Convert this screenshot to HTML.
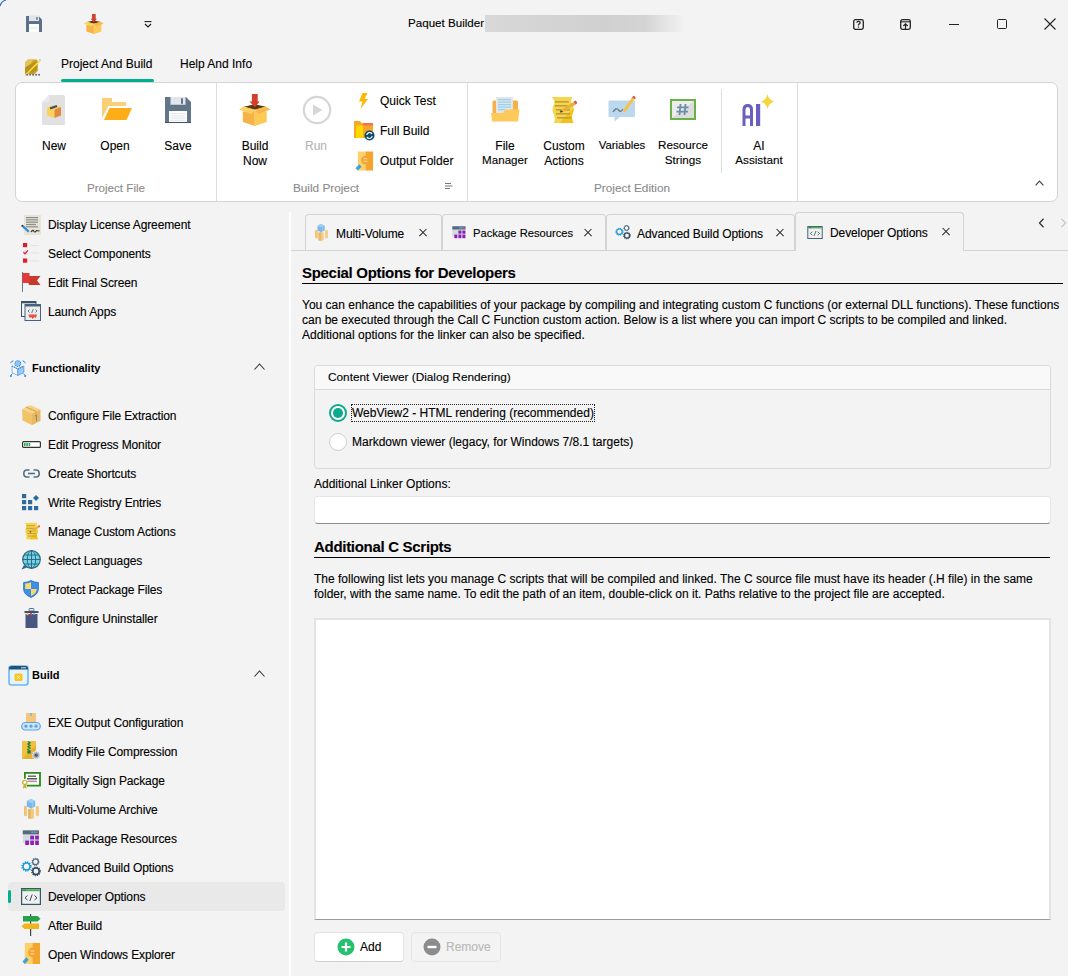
<!DOCTYPE html>
<html><head><meta charset="utf-8">
<style>
*{margin:0;padding:0;box-sizing:border-box}
html,body{width:1068px;height:976px;overflow:hidden;background:#f3f3f3;font-family:"Liberation Sans",sans-serif;font-size:12px;color:#000}
.a{position:absolute}
.t{position:absolute;white-space:nowrap;line-height:15px;-webkit-text-stroke:0.12px currentColor}
.c{text-align:center}
.n{letter-spacing:-0.12px}
.tt{letter-spacing:-0.1px}
svg{position:absolute;overflow:visible}
.g{color:#8c8c8c}
.sep{position:absolute;background:#dcdcdc;width:1px}
.tab{position:absolute;border:1px solid #d3d3d3;border-bottom:none;border-radius:4px 4px 0 0;background:#f4f4f4}
.x{position:absolute;width:8px;height:8px}
.x:before,.x:after{content:"";position:absolute;left:-1px;top:3.4px;width:10px;height:1.3px;background:#262626;transform:rotate(45deg)}
.x:after{transform:rotate(-45deg)}
</style></head><body>
<!-- ============ TITLE BAR ============ -->
<svg style="left:0;top:0" width="8" height="8"><path d="M0 6 Q1 1.5 6 0" fill="none" stroke="#2a6fc9" stroke-width="1.3"/></svg>
<svg style="left:26px;top:16px" width="16" height="16" viewBox="0 0 16 16">
 <path d="M0 0 H12.5 L16 3.5 V16 H0Z" fill="#5e7189"/>
 <rect x="3" y="-0.6" width="10" height="5.6" fill="#e1e5ea"/>
 <rect x="10.3" y="1" width="1.4" height="2.8" fill="#5e7189"/>
 <rect x="3" y="8" width="10" height="8" fill="#fbfcfc"/>
 <rect x="4" y="11.6" width="8" height="1" fill="#e3e7eb"/>
</svg>
<svg style="left:84px;top:14px" width="20" height="20" viewBox="0 0 32 32"><path d="M4.7 12.7 L15.8 10.2 L26.8 12.7 L15.8 15.7Z" fill="#5c3a0c"/>
  <path d="M3.8 17.4 L15.8 16.5 V32 L3.8 28Z" fill="#f7b446"/>
  <path d="M15.8 16.5 L27.7 17.4 V28 L15.8 32Z" fill="#fdca55"/>
  <path d="M0 15.5 L4.7 12.5 L15.8 15.7 L12.4 20Z" fill="#fdd061"/>
  <path d="M15.8 15.7 L26.8 12.5 L31.5 15.5 L19.5 20Z" fill="#f8b74b"/>
  <path d="M12.9 0 H18.7 V7.5 H20.8 L15.8 13.3 L10.5 7.5 H12.9Z" fill="#d23f2d"/></svg>
<svg style="left:144px;top:21px" width="8" height="7" viewBox="0 0 8 7"><path d="M0.5 0.6 H7.5" stroke="#222" stroke-width="1.1"/><path d="M1 3 L4 6 L7 3" fill="none" stroke="#222" stroke-width="1.2"/></svg>
<div class="t" style="left:408px;top:15px;font-size:11.6px">Paquet Builder</div>
<div class="a" style="left:485px;top:15px;width:200px;height:17px;background:linear-gradient(90deg,#d8d8d8 0%,#d4d4d4 30%,#d0d0d0 60%,#d4d4d4 80%,#f3f3f3 100%)"></div>
<!-- window buttons -->
<svg style="left:853px;top:19px" width="11" height="11" viewBox="0 0 11 11">
 <rect x="0.7" y="0.7" width="9.6" height="9.6" rx="1.8" fill="none" stroke="#222" stroke-width="1.3"/>
 <path d="M3.8 3.8 Q3.8 2.4 5.5 2.4 Q7.2 2.4 7.2 3.8 Q7.2 4.8 5.5 5.4 V6.4" fill="none" stroke="#222" stroke-width="1.2"/>
 <rect x="4.9" y="7.5" width="1.2" height="1.2" fill="#222"/>
</svg>
<svg style="left:900px;top:19px" width="11" height="11" viewBox="0 0 11 11">
 <rect x="0.7" y="0.7" width="9.6" height="9.6" rx="1.8" fill="none" stroke="#222" stroke-width="1.3"/>
 <path d="M1 2.8 H10" stroke="#222" stroke-width="1.1"/>
 <path d="M5.5 10 V5 M3.3 7 L5.5 4.8 L7.7 7" fill="none" stroke="#222" stroke-width="1.2"/>
</svg>
<div class="a" style="left:949px;top:24px;width:10px;height:1px;background:#222"></div>
<div class="a" style="left:997px;top:19px;width:10px;height:10px;border:1px solid #222;border-radius:1.5px"></div>
<svg style="left:1044px;top:18px" width="12" height="12" viewBox="0 0 12 12"><path d="M0.5 0.5 L11.5 11.5 M11.5 0.5 L0.5 11.5" stroke="#222" stroke-width="1.1"/></svg>

<!-- ============ RIBBON TABS ============ -->
<svg style="left:24px;top:59px" width="17" height="17" viewBox="0 0 16 16">
 <path d="M1 3 L4 0.5 H12 L13 2 V11 L10 14 H1Z" fill="#c9a227"/>
 <path d="M1 3 L4 0.5 H9 L6 5 L1 8Z" fill="#e3c55a"/>
 <path d="M6 5 L12 2 V10 L8 13 L1 13 V8Z" fill="#a8851c" opacity=".6"/>
 <path d="M0.5 15 L14.5 1 L15.5 2 L1.5 16Z" fill="#ffd93a"/>
 <path d="M13.5 0.5 L15.5 0 L16 2 Z" fill="#a8c8d8"/>
 <g fill="#707070"><circle cx="3" cy="14.8" r="1"/><circle cx="5.8" cy="14.8" r="1"/><circle cx="8.6" cy="14.8" r="1"/><circle cx="11.4" cy="14.8" r="1"/><circle cx="14.2" cy="14.8" r="1"/></g>
</svg>
<div class="t" style="left:61px;top:57px">Project And Build</div>
<div class="a" style="left:61px;top:79px;width:93px;height:3px;border-radius:2px;background:#00ae90"></div>
<div class="t" style="left:180px;top:57px">Help And Info</div>
<!-- ============ RIBBON PANEL ============ -->
<div class="a" style="left:15px;top:82px;width:1043px;height:120px;background:#fff;border:1px solid #d4d4d4;border-radius:7px"></div>
<div class="sep" style="left:216px;top:83px;height:118px"></div>
<div class="sep" style="left:467px;top:83px;height:118px"></div>
<div class="sep" style="left:797px;top:83px;height:118px"></div>
<div class="sep" style="left:721px;top:89px;height:84px"></div>
<svg style="left:1035px;top:180px" width="9" height="6" viewBox="0 0 9 6"><path d="M0.6 5.3 L4.5 1.2 L8.4 5.3" fill="none" stroke="#444" stroke-width="1.2"/></svg>

<!-- New -->
<svg style="left:42px;top:95px" width="23" height="30" viewBox="0 0 23 30">
 <path d="M7 0 H21.5 Q23 0 23 1.5 V28.5 Q23 30 21.5 30 H1.5 Q0 30 0 28.5 V7Z" fill="#e1e1e1"/>
 <path d="M0 7 L7 0 V7Z" fill="#e9ebee"/>
 <path d="M5 12.5 L11.5 10 L19 12 L12.5 14.5Z" fill="#fbd35c"/>
 <path d="M5 12.5 L12.5 14.5 V23 L5 20.5Z" fill="#fcd25a"/>
 <path d="M12.5 14.5 L19 12 V20.5 L12.5 23Z" fill="#e18a3b"/>
 <path d="M8 13.5 L15 11" stroke="#34506a" stroke-width="2"/>
</svg>
<!-- Open -->
<svg style="left:102px;top:98px" width="31" height="22" viewBox="0 0 31 22">
 <path d="M0 0 H10 V4 H24 V8 H6.5 L0 20Z" fill="#f9cf78"/>
 <path d="M7.5 10 H30 L24.5 22 H2Z" fill="#fdad17"/>
</svg>
<!-- Save -->
<svg style="left:165px;top:97px" width="26" height="26" viewBox="0 0 26 26">
 <path d="M0 0 H21 L26 5 V26 H0Z" fill="#61768b"/>
 <rect x="5.5" y="0" width="15" height="8.5" fill="#e2e6ea"/>
 <rect x="5.5" y="7.8" width="15" height="1" fill="#4e6176"/>
 <rect x="16" y="1.3" width="2" height="5.5" fill="#61768b"/>
 <rect x="4" y="14" width="18" height="11" fill="#fdfdfd"/>
 <g fill="#e3e7eb"><rect x="5.5" y="16" width="15" height="1"/><rect x="5.5" y="18.4" width="15" height="1"/><rect x="5.5" y="20.6" width="15" height="1"/><rect x="5.5" y="22.8" width="15" height="1"/></g>
 <rect x="0" y="25" width="26" height="1" fill="#3e5166"/>
</svg>
<div class="t c" style="left:30px;top:139px;width:48px">New</div>
<div class="t c" style="left:91px;top:139px;width:48px">Open</div>
<div class="t c" style="left:154px;top:139px;width:48px">Save</div>
<div class="t c g" style="left:66px;top:180px;width:100px;font-size:11.6px">Project File</div>

<!-- Build Now -->
<svg style="left:239px;top:94px" width="32" height="32" viewBox="0 0 32 32"><path d="M4.7 12.7 L15.8 10.2 L26.8 12.7 L15.8 15.7Z" fill="#5c3a0c"/>
  <path d="M3.8 17.4 L15.8 16.5 V32 L3.8 28Z" fill="#f7b446"/>
  <path d="M15.8 16.5 L27.7 17.4 V28 L15.8 32Z" fill="#fdca55"/>
  <path d="M0 15.5 L4.7 12.5 L15.8 15.7 L12.4 20Z" fill="#fdd061"/>
  <path d="M15.8 15.7 L26.8 12.5 L31.5 15.5 L19.5 20Z" fill="#f8b74b"/>
  <path d="M12.9 0 H18.7 V7.5 H20.8 L15.8 13.3 L10.5 7.5 H12.9Z" fill="#d23f2d"/></svg>
<!-- Run -->
<svg style="left:302px;top:95px" width="30" height="30" viewBox="0 0 30 30">
 <circle cx="15" cy="15" r="13.2" fill="none" stroke="#d6d6d6" stroke-width="2.2"/>
 <path d="M11 9.5 L20.5 15 L11 20.5Z" fill="#d6d6d6"/>
</svg>
<div class="t c" style="left:230px;top:139px;width:50px">Build</div>
<div class="t c" style="left:230px;top:154px;width:50px">Now</div>
<div class="t c" style="left:292px;top:139px;width:48px;color:#b4b4b4">Run</div>
<!-- quick test -->
<svg style="left:359px;top:93px" width="9" height="16" viewBox="0 0 9 16"><path d="M3.5 0 H8.5 L5.5 6 H9 L1.5 16 L3.5 8.5 H0Z" fill="#fbb800"/></svg>
<!-- full build -->
<svg style="left:354px;top:121px" width="21" height="19" viewBox="0 0 21 19">
 <path d="M0 0 H6 L7.5 2 H19 V17 H0Z" fill="#f8a62a"/>
 <rect x="9" y="2" width="10" height="2.5" fill="#f6744a"/>
 <rect x="2" y="4.5" width="7" height="12.5" fill="#ffd800"/>
 <circle cx="15.5" cy="14.5" r="5" fill="#0c4a68"/>
 <path d="M12.8 14 A2.8 2.8 0 0 1 17.8 12.6 M18.2 15 A2.8 2.8 0 0 1 13.2 16.4" fill="none" stroke="#fff" stroke-width="1.2"/>
 <path d="M17 11.2 L18.6 12.9 L16.6 13.2Z M14 17.8 L12.4 16.1 L14.4 15.8Z" fill="#fff"/>
</svg>
<!-- output folder -->
<svg style="left:355px;top:151px" width="19" height="20" viewBox="0 0 20 20"><rect x="3" y="0" width="8" height="20" fill="#fdd06a"/>
  <rect x="11" y="0" width="8" height="20" fill="#f4a52a"/>
  <circle cx="11" cy="9" r="4.6" fill="#f2a535"/>
  <g fill="#fcd58a"><rect x="9" y="7" width="4" height="1.2"/><rect x="9" y="9.8" width="4" height="1.2"/></g>
  <path d="M0.5 17.5 L4.5 13.5 L7 16 L3 20 Z" fill="#3ba3e0"/></svg>
<div class="t" style="left:380px;top:94px">Quick Test</div>
<div class="t" style="left:380px;top:124px">Full Build</div>
<div class="t" style="left:380px;top:154px">Output Folder</div>
<div class="t c g" style="left:276px;top:181px;width:100px;font-size:11.8px">Build Project</div>
<svg style="left:445px;top:183px" width="8" height="7" viewBox="0 0 8 7"><path d="M0 0.5 H6 M0 3 H7.5 M0 5.5 H5" stroke="#777" stroke-width="1"/></svg>

<!-- File Manager -->
<svg style="left:491px;top:96px" width="29" height="27" viewBox="0 0 29 27">
 <path d="M1.5 6 Q1.5 4.5 3 4.5 H26 Q27 4.5 27 6 V17 H1.5Z" fill="#f5b04c"/>
 <rect x="5" y="1" width="17" height="16" fill="#e4e4e4"/>
 <g fill="#92d5f6"><rect x="7" y="3" width="13" height="1.3"/><rect x="7" y="5.5" width="13" height="1.3"/><rect x="7" y="8" width="13" height="1.3"/><rect x="7" y="10.5" width="13" height="1.3"/><rect x="7" y="13" width="7" height="1.3"/></g>
 <path d="M0 17 H12 L14.5 13.5 H28.5 L27 25.5 H1Z" fill="#fdc95a"/>
</svg>
<!-- Custom Actions -->
<svg style="left:549px;top:96px" width="28" height="28" viewBox="0 0 24 28" preserveAspectRatio="none"><path d="M2 1 H20 Q18 5 20 9 Q22 14 20 18 Q19 22 21 27 H4 Q6 23 4 18 Q2 13 4 9 Q6 5 2 1Z" fill="#f8d34c"/>
  <path d="M21 9 Q22 14 20 18 Q19 22 21 27 H9 L21 12Z" fill="#f2c21a"/>
  <g fill="#bba13c"><rect x="5" y="5" width="12" height="1.6"/><rect x="5" y="9" width="11" height="1.6"/><rect x="6" y="13" width="12" height="1.6"/><rect x="6" y="17" width="12" height="1.6"/><rect x="7" y="21" width="12" height="1.6"/></g>
  <path d="M10 14 L21 6 L23 8.5 L12 16 L9.5 16.5Z" fill="#e8b23c"/>
  <path d="M21 6 L22.5 4.5 Q24.5 5.5 24 7.5 L23 8.5Z" fill="#e0553a"/>
  <path d="M9.5 16.5 L10 14 L12 16Z" fill="#333"/></svg>
<!-- Variables -->
<svg style="left:608px;top:94px" width="28" height="28" viewBox="0 0 28 28">
 <path d="M1.5 6.5 H26 Q27 6.5 27 7.5 V22 Q27 23 26 23 H12 L6.5 27.5 V23 H1.5 Q0.5 23 0.5 22 V7.5 Q0.5 6.5 1.5 6.5Z" fill="#bcd8ef"/>
 <path d="M5 18 Q8 13 10.5 16 Q12.5 19 15 15" fill="none" stroke="#6e7f8c" stroke-width="1.4"/>
 <path d="M15.5 15.5 L24 3.5 L26.5 5.3 L18 17.3 L15.2 18.2Z" fill="#f4c14a"/>
 <path d="M24 3.5 L25.2 1.8 Q27.5 2.3 27.8 4.2 L26.5 5.3Z" fill="#df5b3c"/>
</svg>
<!-- Resource Strings -->
<svg style="left:670px;top:99px" width="26" height="21" viewBox="0 0 26 21">
 <rect x="1" y="1" width="24" height="19" fill="#ececec" stroke="#6ab14a" stroke-width="2"/>
 <path d="M2 19 L24 2 V19Z" fill="#dcdcdc"/>
 <path d="M10.5 5 L9.5 16 M15.5 5 L14.5 16 M7 8.3 H18.5 M6.5 12.7 H18" stroke="#6b8fa8" stroke-width="1.8"/>
</svg>
<!-- AI -->
<svg style="left:742px;top:94px" width="33" height="33" viewBox="0 0 33 33">
 <path d="M0.5 32 V15.5 Q0.5 10 5.8 10 Q11 10 11 15.5 V32 H8 V24.5 H3.5 V32Z M3.5 21.5 H8 V15.5 Q8 13 5.8 13 Q3.5 13 3.5 15.5Z" fill="#6a5fc1"/>
 <rect x="14" y="10" width="4.2" height="22" fill="#6a5fc1"/>
 <path d="M25.5 0 Q26.5 6 32.5 7.5 Q26.5 9 25.5 15 Q24.5 9 18.5 7.5 Q24.5 6 25.5 0Z" fill="#f4d63c"/>
</svg>
<div class="t c" style="left:475px;top:139px;width:60px">File</div>
<div class="t c" style="left:475px;top:152px;width:60px;font-size:11.6px">Manager</div>
<div class="t c" style="left:534px;top:139px;width:60px">Custom</div>
<div class="t c" style="left:534px;top:154px;width:60px">Actions</div>
<div class="t c" style="left:592px;top:138px;width:60px;font-size:11.4px">Variables</div>
<div class="t c" style="left:653px;top:137px;width:60px;font-size:11.7px">Resource</div>
<div class="t c" style="left:653px;top:152px;width:60px;font-size:11.7px">Strings</div>
<div class="t c" style="left:729px;top:139px;width:60px">AI</div>
<div class="t c" style="left:729px;top:152px;width:60px;font-size:11.7px">Assistant</div>
<div class="t c g" style="left:582px;top:181px;width:100px;font-size:11.8px">Project Edition</div>
<!-- ============ LEFT NAV ============ -->
<div class="a" style="left:289px;top:212px;width:2px;height:764px;background:#fff"></div>
<div class="a" style="left:8px;top:882px;width:277px;height:29px;border-radius:4px;background:#e9e9e9"></div>
<div class="a" style="left:8px;top:890px;width:3px;height:13px;border-radius:2px;background:#00ae90"></div>

<!-- license -->
<svg style="left:21px;top:215px" width="20" height="20" viewBox="0 0 20 20">
 <rect x="3" y="0" width="17" height="20" fill="#e6e4d6"/>
 <g fill="#8c8c8c"><rect x="5" y="2" width="12" height="1.2"/><rect x="5" y="4.3" width="12" height="1.2"/><rect x="5" y="6.6" width="12" height="1.2"/><rect x="5" y="8.9" width="10" height="1.2"/><rect x="5" y="11.2" width="12" height="1.2"/></g>
 <path d="M1 12 L2.8 10.5 L8.5 16 L7 17.5Z" fill="#2e8fd8"/>
 <path d="M0 11 L1.5 9.8 L2.8 10.5 L1 12Z" fill="#333"/>
 <path d="M10 17 Q12 14 13 16.5 Q14 18 15.5 15.5 L18.5 16" fill="none" stroke="#333" stroke-width="1.1"/>
</svg>
<!-- select components -->
<svg style="left:22px;top:243px" width="18" height="20" viewBox="0 0 18 20">
 <rect x="1" y="0" width="4.2" height="4.2" fill="#e31b23"/>
 <rect x="1" y="7.5" width="4.2" height="4.2" fill="#dddddd"/>
 <path d="M1.5 9.2 L3 10.8 L6 7.3" fill="none" stroke="#e31b48" stroke-width="1.2"/>
 <rect x="1" y="15.5" width="4.2" height="4.2" fill="#e31b23"/>
 <g fill="#e2e2e2"><rect x="8" y="2" width="9" height="0.9"/><rect x="8" y="9.5" width="9" height="0.9"/><rect x="8" y="17.5" width="9" height="0.9"/></g>
</svg>
<!-- flag -->
<svg style="left:21px;top:272px" width="20" height="21" viewBox="0 0 20 21">
 <rect x="1" y="0" width="1" height="20" fill="#6b7a88"/>
 <path d="M8 4 H19.5 L16 8.5 L19.5 13 H9Q7.5 13 7.5 11.5Z" fill="#c8392c"/>
 <path d="M1.5 1 H8.5 V11 H1.5Z" fill="#e2393a"/>
</svg>
<!-- launch apps -->
<svg style="left:21px;top:301px" width="20" height="20" viewBox="0 0 20 20">
 <rect x="0.5" y="0.5" width="14.5" height="15" fill="#f4f6f8" stroke="#3c5268" stroke-width="1"/>
 <rect x="0.5" y="0.5" width="14.5" height="1.8" fill="#3c5268"/>
 <rect x="4" y="3.5" width="15.5" height="16" fill="#e9eef2" stroke="#4a6178" stroke-width="1"/>
 <rect x="4" y="3.5" width="15.5" height="2" fill="#4a6178"/>
 <path d="M8.5 8.5 L7 10 L8.5 11.5 M14.5 8.5 L16 10 L14.5 11.5 M12.3 8 L10.7 12" fill="none" stroke="#555" stroke-width=".8"/>
 <path d="M7.5 13.5 H16 L15 17 L13.5 16 L11.7 18 L10 16 L8.5 17Z" fill="#e8533a"/>
</svg>
<div class="t n" style="left:48px;top:218px">Display License Agreement</div>
<div class="t n" style="left:48px;top:247px">Select Components</div>
<div class="t n" style="left:48px;top:276px">Edit Final Screen</div>
<div class="t n" style="left:48px;top:305px">Launch Apps</div>

<!-- Functionality header -->
<svg style="left:10px;top:360px" width="16" height="17" viewBox="0 0 16 17">
 <path d="M2 6 L7.8 9 V15.5 L2 12.5Z" fill="#f6f9fc" stroke="#7fb4ec" stroke-width=".9"/>
 <path d="M7.8 9 L13.8 6 V12.5 L7.8 15.5Z" fill="#9ccaf8" stroke="#5aa0e8" stroke-width=".9"/>
 <path d="M2 6 L7.8 9 L13.8 6" fill="none" stroke="#2a84de" stroke-width="1.3" stroke-dasharray="1.1 1.1"/>
 <circle cx="7.8" cy="3.6" r="2.9" fill="#92c4f6" stroke="#2a84de" stroke-width="1.1" stroke-dasharray="1.1 .9"/>
 <g fill="#2a84de"><circle cx="0.9" cy="15.9" r="1"/><circle cx="15.1" cy="15.9" r="1"/></g>
 <path d="M0.6 3.2 Q1.2 1.2 3.4 0.9 M12.6 0.9 Q14.8 1.2 15.4 3.2 M2.5 13.5 L1 15 M13.3 13.5 L14.8 15" fill="none" stroke="#2a84de" stroke-width="1"/>
</svg>
<div class="t" style="left:32px;top:361px;font-weight:bold;font-size:11px;-webkit-text-stroke:0">Functionality</div>
<svg style="left:254px;top:363px" width="11" height="7" viewBox="0 0 11 7"><path d="M0.5 6.5 L5.5 1 L10.5 6.5" fill="none" stroke="#333" stroke-width="1.1"/></svg>

<!-- configure file extraction (box) -->
<svg style="left:22px;top:405px" width="19" height="20" viewBox="0 0 19 20">
 <path d="M0 4 L8 0 L18.5 4.5 L10 8.5Z" fill="#f6d38a"/>
 <path d="M0 4 L10 8.5 V20 L0.5 15.5Z" fill="#f2c46a"/>
 <path d="M10 8.5 L18.5 4.5 V16 L10 20Z" fill="#eab95c"/>
 <path d="M4 2 L14 6.5 V9" fill="none" stroke="#d9a94c" stroke-width="1.2"/>
 <path d="M13 11 L14.5 10.3 V16" fill="none" stroke="#7a8a96" stroke-width="1.1"/>
</svg>
<!-- progress monitor -->
<svg style="left:22px;top:441px" width="19" height="7" viewBox="0 0 19 7">
 <rect x="0.6" y="0.6" width="17.8" height="5.8" rx="1" fill="#fff" stroke="#333" stroke-width="1.2"/>
 <g fill="#2fa84f"><rect x="2" y="2" width="1.6" height="3"/><rect x="4.3" y="2" width="1.6" height="3"/><rect x="6.6" y="2" width="1.6" height="3"/></g>
</svg>
<!-- shortcuts -->
<svg style="left:23px;top:469px" width="17" height="9" viewBox="0 0 17 9">
 <path d="M6.5 1 H4 Q0.8 1 0.8 4.5 Q0.8 8 4 8 H6.5 M10.5 1 H13 Q16.2 1 16.2 4.5 Q16.2 8 13 8 H10.5" fill="none" stroke="#4f7185" stroke-width="1.6"/>
 <path d="M5 4.5 H12" stroke="#4f7185" stroke-width="1.6"/>
</svg>
<!-- registry -->
<svg style="left:22px;top:494px" width="18" height="17" viewBox="0 0 18 17">
 <g fill="#2d6aa0"><rect x="0" y="0" width="4.2" height="4.2"/><rect x="0" y="6" width="4.2" height="4.2"/><rect x="0" y="12" width="4.2" height="4.2"/><rect x="6" y="6" width="4.2" height="4.2"/><rect x="6" y="12" width="4.2" height="4.2"/><rect x="12" y="12" width="4.2" height="4.2"/><path d="M14 1 L17 4 L14 7 L11 4Z"/></g>
</svg>
<!-- manage custom actions -->
<svg style="left:23px;top:522px" width="17" height="18" viewBox="0 0 24 28" preserveAspectRatio="none"><path d="M2 1 H20 Q18 5 20 9 Q22 14 20 18 Q19 22 21 27 H4 Q6 23 4 18 Q2 13 4 9 Q6 5 2 1Z" fill="#f8d34c"/>
  <path d="M21 9 Q22 14 20 18 Q19 22 21 27 H9 L21 12Z" fill="#f2c21a"/>
  <g fill="#bba13c"><rect x="5" y="5" width="12" height="1.6"/><rect x="5" y="9" width="11" height="1.6"/><rect x="6" y="13" width="12" height="1.6"/><rect x="6" y="17" width="12" height="1.6"/><rect x="7" y="21" width="12" height="1.6"/></g>
  <path d="M10 14 L21 6 L23 8.5 L12 16 L9.5 16.5Z" fill="#e8b23c"/>
  <path d="M21 6 L22.5 4.5 Q24.5 5.5 24 7.5 L23 8.5Z" fill="#e0553a"/>
  <path d="M9.5 16.5 L10 14 L12 16Z" fill="#333"/></svg>
<!-- languages globe -->
<svg style="left:21px;top:550px" width="20" height="20" viewBox="0 0 20 20">
 <circle cx="10.5" cy="9.5" r="8.8" fill="#74d4e2" stroke="#2c6b88" stroke-width="1.2"/>
 <path d="M10.5 0.7 V18.3 M1.7 9.5 H19.3 M3 5 H18 M3 14 H18" stroke="#2c6b88" stroke-width="1"/>
 <ellipse cx="10.5" cy="9.5" rx="4.2" ry="8.8" fill="none" stroke="#2c6b88" stroke-width="1"/>
 <path d="M0.5 19.5 L3 15 L6 17.5Z" fill="#2c6b88"/>
</svg>
<!-- shield -->
<svg style="left:23px;top:580px" width="16" height="18" viewBox="0 0 16 18">
 <path d="M8 0.6 Q11.5 2.5 15.3 2.5 V9 Q15.3 14.5 8 17.4 Q0.7 14.5 0.7 9 V2.5 Q4.5 2.5 8 0.6Z" fill="#3d8fe8" stroke="#2b78d0" stroke-width="1"/>
 <path d="M8 2.2 V9 H2.2 V3.6 Q5.5 3.5 8 2.2Z" fill="#ffd86a"/>
 <path d="M8 9 H13.8 Q13.6 13.6 8 15.9Z" fill="#ffd86a"/>
</svg>
<!-- trash -->
<svg style="left:24px;top:608px" width="15" height="20" viewBox="0 0 15 20">
 <rect x="5" y="0.5" width="5" height="2.5" rx="1" fill="none" stroke="#4e6fa0" stroke-width="1"/>
 <rect x="0.5" y="3" width="14" height="2" fill="#3f4f70"/>
 <rect x="1.5" y="6" width="12" height="14" fill="#4a5682"/>
 <circle cx="3.5" cy="6" r="1.2" fill="#f5c244"/><circle cx="7" cy="6" r="1.2" fill="#e0485a"/><circle cx="10" cy="6" r="1" fill="#8aa4c8"/>
</svg>
<div class="t n" style="left:48px;top:409px">Configure File Extraction</div>
<div class="t n" style="left:48px;top:438px">Edit Progress Monitor</div>
<div class="t n" style="left:48px;top:467px">Create Shortcuts</div>
<div class="t n" style="left:48px;top:496px">Write Registry Entries</div>
<div class="t n" style="left:48px;top:525px">Manage Custom Actions</div>
<div class="t n" style="left:48px;top:554px">Select Languages</div>
<div class="t n" style="left:48px;top:583px">Protect Package Files</div>
<div class="t n" style="left:48px;top:612px">Configure Uninstaller</div>

<!-- Build header -->
<svg style="left:8px;top:665px" width="21" height="21" viewBox="0 0 21 21">
 <rect x="1" y="1" width="19" height="19" rx="2.5" fill="#e3f2fd" stroke="#6cb6f2" stroke-width="1.6"/>
 <path d="M1 3.5 Q1 1 3.5 1 H17.5 Q20 1 20 3.5 V4.5 H1Z" fill="#1f5476"/>
 <rect x="13" y="2" width="5" height="1.4" fill="#9bb6c8"/>
 <rect x="6.5" y="8.5" width="8" height="7.5" rx="1.5" fill="#fcc419"/>
 <path d="M8.8 10.8 L12.2 13.8 M12.2 10.8 L8.8 13.8" stroke="#fff3c4" stroke-width="1"/>
</svg>
<div class="t" style="left:32px;top:668px;font-weight:bold;font-size:11px;-webkit-text-stroke:0">Build</div>
<svg style="left:254px;top:670px" width="11" height="7" viewBox="0 0 11 7"><path d="M0.5 6.5 L5.5 1 L10.5 6.5" fill="none" stroke="#333" stroke-width="1.1"/></svg>

<!-- exe output -->
<svg style="left:21px;top:713px" width="20" height="18" viewBox="0 0 20 18">
 <rect x="5" y="0" width="10" height="9" fill="#f5c77e"/>
 <rect x="9.3" y="0" width="1.4" height="3" fill="#6fb3e6"/>
 <rect x="0.7" y="9.5" width="18.6" height="7.5" rx="3.7" fill="#cfe6fa" stroke="#5aa5e6" stroke-width="1.2"/>
 <g fill="#5aa5e6"><circle cx="5" cy="13.2" r="1.6"/><circle cx="10" cy="13.2" r="1.6"/><circle cx="15" cy="13.2" r="1.6"/></g>
</svg>
<!-- compression -->
<svg style="left:22px;top:741px" width="19" height="19" viewBox="0 0 19 19">
 <rect x="0" y="0" width="14" height="18" rx="1" fill="#f0c23e"/>
 <path d="M0 18 L14 4 V18Z" fill="#e2b230"/>
 <path d="M6 0.5 L8 1.8 L6 3.1 L8 4.4 L6 5.7 L8 7 L6 8.3 L8 9.6" fill="none" stroke="#1e7e46" stroke-width="1.3"/>
 <rect x="5.3" y="9.5" width="3.4" height="3" fill="#1e7e46"/>
 <circle cx="14.2" cy="14.2" r="3.7" fill="#aab2ba" stroke="#eef0f2" stroke-width="1.3" stroke-dasharray="1.3 .9"/>
 <circle cx="14.2" cy="14.2" r="1.6" fill="#4f5a7a"/>
</svg>
<!-- digitally sign -->
<svg style="left:21px;top:772px" width="20" height="18" viewBox="0 0 20 18">
 <rect x="4" y="1.8" width="14.2" height="11" fill="#fff"/>
 <path d="M3.9 6.8 V0.9 H19 V13.7 H5.8" fill="none" stroke="#2b8a1c" stroke-width="1.8"/>
 <rect x="7" y="3.6" width="8" height="1.1" fill="#333"/>
 <rect x="6" y="6" width="10" height="1.5" fill="#555"/>
 <rect x="6.5" y="8.6" width="9.5" height="1.5" fill="#9a9a9a"/>
 <circle cx="3.8" cy="10.4" r="2.1" fill="#fff" stroke="#c4b22a" stroke-width="1.3"/>
 <path d="M2.7 12.3 L1.9 16.8 L3.8 15.4 L5.7 16.8 L4.9 12.3Z" fill="#c4b22a"/>
</svg>
<!-- multi volume -->
<svg style="left:24px;top:799px" width="15" height="20" viewBox="0 0 15 20"><path d="M0 7.5 L1.4 6.8 L3 7.5 V16.5 L1.4 17.2 L0 16.5Z" fill="#ecbf6e"/>
  <path d="M1.4 6.8 L3 7.5 V16.5 L1.4 17.2Z" fill="#f3cb80"/>
  <path d="M11.8 7.5 L13.4 6.8 L15 7.5 V16.5 L13.4 17.2 L11.8 16.5Z" fill="#f3cb80"/>
  <path d="M4 10 L7 9.2 L10 10 V19.2 L7 20 L4 19.2Z" fill="#f3cb80"/>
  <path d="M4 10 L7 10.8 V20 L4 19.2Z" fill="#e6b868"/>
  <path d="M2.8 2 L7 0 L11.2 2 V7.6 L7 9.6 L2.8 7.6Z" fill="#79b8ea"/>
  <path d="M2.8 2 L7 4 L11.2 2 L7 0Z" fill="#a3d2f5"/>
  <path d="M4.5 1.2 L8.8 3.2 V8.6" fill="none" stroke="#9ccdf2" stroke-width="1"/></svg>
<!-- package resources -->
<svg style="left:22px;top:830px" width="18" height="16" viewBox="0 0 14 13"><rect x="0.3" y="0.3" width="13.2" height="10.2" fill="#d3dbe2"/>
  <rect x="0.3" y="0.3" width="13.2" height="3.2" fill="#56697a"/>
  <circle cx="8" cy="1.9" r=".8" fill="#5aaaf0"/><circle cx="10" cy="1.9" r=".8" fill="#5aaaf0"/><circle cx="12" cy="1.9" r=".8" fill="#e05a5a"/>
  <g fill="#8e1fb0"><rect x="6.4" y="4.6" width="3" height="3.1"/><rect x="10.4" y="4.6" width="3" height="3.1"/><rect x="2.3" y="8.6" width="3" height="3.6"/><rect x="6.4" y="8.6" width="3" height="3.6"/><rect x="10.4" y="8.6" width="3" height="3.6"/></g></svg>
<!-- gears -->
<svg style="left:21px;top:858px" width="20" height="19" viewBox="0 0 20 19"><circle cx="5.5" cy="8.5" r="4.3" fill="none" stroke="#1f9ad6" stroke-width="1.8" stroke-dasharray="1.2 1.05"/>
  <circle cx="5.5" cy="8.5" r="3.4" fill="none" stroke="#1f9ad6" stroke-width="1.5"/>
  <circle cx="14.5" cy="3.8" r="3.3" fill="none" stroke="#4f6b80" stroke-width="1.3" stroke-dasharray="1 .8"/>
  <circle cx="14.5" cy="3.8" r="2.8" fill="none" stroke="#4f6b80" stroke-width="1.2"/>
  <circle cx="15" cy="13.3" r="4" fill="none" stroke="#2f4a60" stroke-width="1.8" stroke-dasharray="1.1 1"/>
  <circle cx="15" cy="13.3" r="3.2" fill="none" stroke="#2f4a60" stroke-width="1.5"/></svg>
<!-- dev -->
<svg style="left:21px;top:888px" width="20" height="17" viewBox="0 0 20 17"><rect x="0.6" y="0.6" width="18.8" height="15.8" fill="#eef0f1" stroke="#3a5564" stroke-width="1.2"/>
  <rect x="1.2" y="1.2" width="17.6" height="2" fill="#4cb35a"/>
  <rect x="1.5" y="1.4" width="3.5" height="1.5" fill="#3a5564" opacity=".5"/>
  <path d="M6.5 7.5 L4 9.8 L6.5 12 M13.5 7.5 L16 9.8 L13.5 12 M11.2 6.5 L8.8 13" fill="none" stroke="#3a4a55" stroke-width="1"/></svg>
<!-- after build -->
<svg style="left:21px;top:914px" width="20" height="22" viewBox="0 0 20 22">
 <rect x="9" y="0" width="1.2" height="22" fill="#3d4a55"/>
 <path d="M2 2 H16.5 L19.5 4.8 L16.5 7.6 H2Z" fill="#26a148"/>
 <path d="M3.5 9.5 H18 V15 H3.5 L0.5 12.2Z" fill="#f0b41e"/>
</svg>
<!-- open explorer -->
<svg style="left:22px;top:943px" width="19" height="21" viewBox="0 0 20 20" preserveAspectRatio="none"><rect x="3" y="0" width="8" height="20" fill="#fdd06a"/>
  <rect x="11" y="0" width="8" height="20" fill="#f4a52a"/>
  <circle cx="11" cy="9" r="4.6" fill="#f2a535"/>
  <g fill="#fcd58a"><rect x="9" y="7" width="4" height="1.2"/><rect x="9" y="9.8" width="4" height="1.2"/></g>
  <path d="M0.5 17.5 L4.5 13.5 L7 16 L3 20 Z" fill="#3ba3e0"/></svg>
<div class="t n" style="left:48px;top:716px">EXE Output Configuration</div>
<div class="t n" style="left:48px;top:745px">Modify File Compression</div>
<div class="t n" style="left:48px;top:774px">Digitally Sign Package</div>
<div class="t n" style="left:48px;top:803px">Multi-Volume Archive</div>
<div class="t n" style="left:48px;top:832px">Edit Package Resources</div>
<div class="t n" style="left:48px;top:861px">Advanced Build Options</div>
<div class="t n" style="left:48px;top:890px">Developer Options</div>
<div class="t n" style="left:48px;top:919px">After Build</div>
<div class="t n" style="left:48px;top:948px">Open Windows Explorer</div>
<!-- ============ TABS ============ -->
<div class="a" style="left:291px;top:250px;width:777px;height:1px;background:#d3d3d3"></div>
<div class="tab" style="left:305px;top:214px;width:137px;height:36px"></div>
<div class="tab" style="left:442px;top:214px;width:164px;height:36px"></div>
<div class="tab" style="left:606px;top:214px;width:189px;height:36px"></div>
<div class="tab" style="left:795px;top:212px;width:169px;height:39px;background:#f3f3f3"></div>
<svg style="left:315px;top:224px" width="13" height="17" viewBox="0 0 15 20"><path d="M0 7.5 L1.4 6.8 L3 7.5 V16.5 L1.4 17.2 L0 16.5Z" fill="#ecbf6e"/>
  <path d="M1.4 6.8 L3 7.5 V16.5 L1.4 17.2Z" fill="#f3cb80"/>
  <path d="M11.8 7.5 L13.4 6.8 L15 7.5 V16.5 L13.4 17.2 L11.8 16.5Z" fill="#f3cb80"/>
  <path d="M4 10 L7 9.2 L10 10 V19.2 L7 20 L4 19.2Z" fill="#f3cb80"/>
  <path d="M4 10 L7 10.8 V20 L4 19.2Z" fill="#e6b868"/>
  <path d="M2.8 2 L7 0 L11.2 2 V7.6 L7 9.6 L2.8 7.6Z" fill="#79b8ea"/>
  <path d="M2.8 2 L7 4 L11.2 2 L7 0Z" fill="#a3d2f5"/>
  <path d="M4.5 1.2 L8.8 3.2 V8.6" fill="none" stroke="#9ccdf2" stroke-width="1"/></svg>
<svg style="left:452px;top:226px" width="14" height="13" viewBox="0 0 14 13"><rect x="0.3" y="0.3" width="13.2" height="10.2" fill="#d3dbe2"/>
  <rect x="0.3" y="0.3" width="13.2" height="3.2" fill="#56697a"/>
  <circle cx="8" cy="1.9" r=".8" fill="#5aaaf0"/><circle cx="10" cy="1.9" r=".8" fill="#5aaaf0"/><circle cx="12" cy="1.9" r=".8" fill="#e05a5a"/>
  <g fill="#8e1fb0"><rect x="6.4" y="4.6" width="3" height="3.1"/><rect x="10.4" y="4.6" width="3" height="3.1"/><rect x="2.3" y="8.6" width="3" height="3.6"/><rect x="6.4" y="8.6" width="3" height="3.6"/><rect x="10.4" y="8.6" width="3" height="3.6"/></g></svg>
<svg style="left:615px;top:225px" width="16" height="15" viewBox="0 0 20 19"><circle cx="5.5" cy="8.5" r="4.3" fill="none" stroke="#1f9ad6" stroke-width="1.8" stroke-dasharray="1.2 1.05"/>
  <circle cx="5.5" cy="8.5" r="3.4" fill="none" stroke="#1f9ad6" stroke-width="1.5"/>
  <circle cx="14.5" cy="3.8" r="3.3" fill="none" stroke="#4f6b80" stroke-width="1.3" stroke-dasharray="1 .8"/>
  <circle cx="14.5" cy="3.8" r="2.8" fill="none" stroke="#4f6b80" stroke-width="1.2"/>
  <circle cx="15" cy="13.3" r="4" fill="none" stroke="#2f4a60" stroke-width="1.8" stroke-dasharray="1.1 1"/>
  <circle cx="15" cy="13.3" r="3.2" fill="none" stroke="#2f4a60" stroke-width="1.5"/></svg>
<svg style="left:807px;top:226px" width="16" height="13" viewBox="0 0 20 17"><rect x="0.6" y="0.6" width="18.8" height="15.8" fill="#eef0f1" stroke="#3a5564" stroke-width="1.2"/>
  <rect x="1.2" y="1.2" width="17.6" height="2" fill="#4cb35a"/>
  <rect x="1.5" y="1.4" width="3.5" height="1.5" fill="#3a5564" opacity=".5"/>
  <path d="M6.5 7.5 L4 9.8 L6.5 12 M13.5 7.5 L16 9.8 L13.5 12 M11.2 6.5 L8.8 13" fill="none" stroke="#3a4a55" stroke-width="1"/></svg>
<div class="t tt" style="left:336px;top:227px">Multi-Volume</div>
<div class="t" style="left:473px;top:226px;font-size:11.2px">Package Resources</div>
<div class="t tt" style="left:637px;top:227px">Advanced Build Options</div>
<div class="t tt" style="left:830px;top:226px">Developer Options</div>
<div class="x" style="left:419px;top:229px"></div>
<div class="x" style="left:584px;top:229px"></div>
<div class="x" style="left:776px;top:229px"></div>
<div class="x" style="left:942px;top:228px"></div>
<svg style="left:1038px;top:218px" width="7" height="10" viewBox="0 0 7 10"><path d="M5.5 0.8 L1.5 5 L5.5 9.2" fill="none" stroke="#333" stroke-width="1.3"/></svg>
<svg style="left:1060px;top:218px" width="7" height="10" viewBox="0 0 7 10"><path d="M1.5 0.8 L5.5 5 L1.5 9.2" fill="none" stroke="#c2c2c2" stroke-width="1.1"/></svg>

<!-- ============ CONTENT ============ -->
<div class="t" style="left:302px;top:264px;font-size:15px;letter-spacing:-0.3px;font-weight:bold;line-height:18px;color:#000;-webkit-text-stroke:0.1px #000">Special Options for Developers</div>
<div class="a" style="left:302px;top:283px;width:761px;height:1px;background:#000"></div>
<div class="t" style="left:302px;top:298px">You can enhance the capabilities of your package by compiling and integrating custom C functions (or external DLL functions). These functions</div>
<div class="t" style="left:302px;top:313px">can be executed through the Call C Function custom action. Below is a list where you can import C scripts to be compiled and linked.</div>
<div class="t" style="left:302px;top:328px">Additional options for the linker can also be specified.</div>

<div class="a" style="left:314px;top:365px;width:737px;height:104px;border:1px solid #dadada;border-radius:4px;background:#f3f3f3;overflow:hidden">
  <div class="a" style="left:0;top:0;width:735px;height:24px;background:#f9f9f9;border-bottom:1px solid #dadada"></div>
</div>
<div class="t" style="left:328px;top:370px;font-size:11.8px">Content Viewer (Dialog Rendering)</div>
<!-- radios -->
<div class="a" style="left:329px;top:404px;width:18px;height:18px;border-radius:50%;background:#0ea88c"></div>
<div class="a" style="left:331px;top:406px;width:14px;height:14px;border-radius:50%;background:#fff"></div>
<div class="a" style="left:333px;top:408px;width:10px;height:10px;border-radius:50%;background:#0ea88c"></div>
<div class="a" style="left:329px;top:433px;width:18px;height:18px;border-radius:50%;background:#fff;border:1px solid #cfcfcf"></div>
<div class="a" style="left:351px;top:404px;width:244px;height:18px;border:1px dotted #222"></div>
<div class="t" style="left:352px;top:406px">WebView2 - HTML rendering (recommended)</div>
<div class="t" style="left:352px;top:435px">Markdown viewer (legacy, for Windows 7/8.1 targets)</div>

<div class="t" style="left:314px;top:477px">Additional Linker Options:</div>
<div class="a" style="left:314px;top:496px;width:737px;height:28px;background:#fff;border:1px solid #e6e6e6;border-bottom:1px solid #8c8c8c;border-radius:4px"></div>

<div class="t" style="left:314px;top:538px;font-size:15px;letter-spacing:-0.3px;font-weight:bold;line-height:18px;color:#000;-webkit-text-stroke:0.1px #000">Additional C Scripts</div>
<div class="a" style="left:314px;top:557px;width:736px;height:1px;background:#000"></div>
<div class="t" style="left:314px;top:572px">The following list lets you manage C scripts that will be compiled and linked. The C source file must have its header (.H file) in the same</div>
<div class="t" style="left:314px;top:587px">folder, with the same name. To edit the path of an item, double-click on it. Paths relative to the project file are accepted.</div>

<div class="a" style="left:314px;top:618px;width:737px;height:302px;background:#fff;border:2px solid #e3e3e3;border-bottom:1px solid #9a9a9a"></div>

<div class="a" style="left:314px;top:932px;width:90px;height:30px;background:#fff;border:1px solid #e3e3e3;border-bottom-color:#cfcfcf;border-radius:4px"></div>
<svg style="left:337px;top:938px" width="18" height="18" viewBox="0 0 18 18"><circle cx="9" cy="9" r="8.5" fill="#25c16f"/><path d="M9 4.5 V13.5 M4.5 9 H13.5" stroke="#fff" stroke-width="2.2"/></svg>
<div class="t" style="left:360px;top:940px">Add</div>
<div class="a" style="left:411px;top:932px;width:90px;height:30px;background:#f3f3f3;border:1px solid #e5e5e5;border-radius:4px"></div>
<svg style="left:423px;top:938px" width="18" height="18" viewBox="0 0 18 18"><circle cx="9" cy="9" r="8.5" fill="#8c8c8c"/><path d="M4.5 9 H13.5" stroke="#fff" stroke-width="2.4"/></svg>
<div class="t" style="left:446px;top:940px;color:#b8b8b8">Remove</div>

</body></html>
